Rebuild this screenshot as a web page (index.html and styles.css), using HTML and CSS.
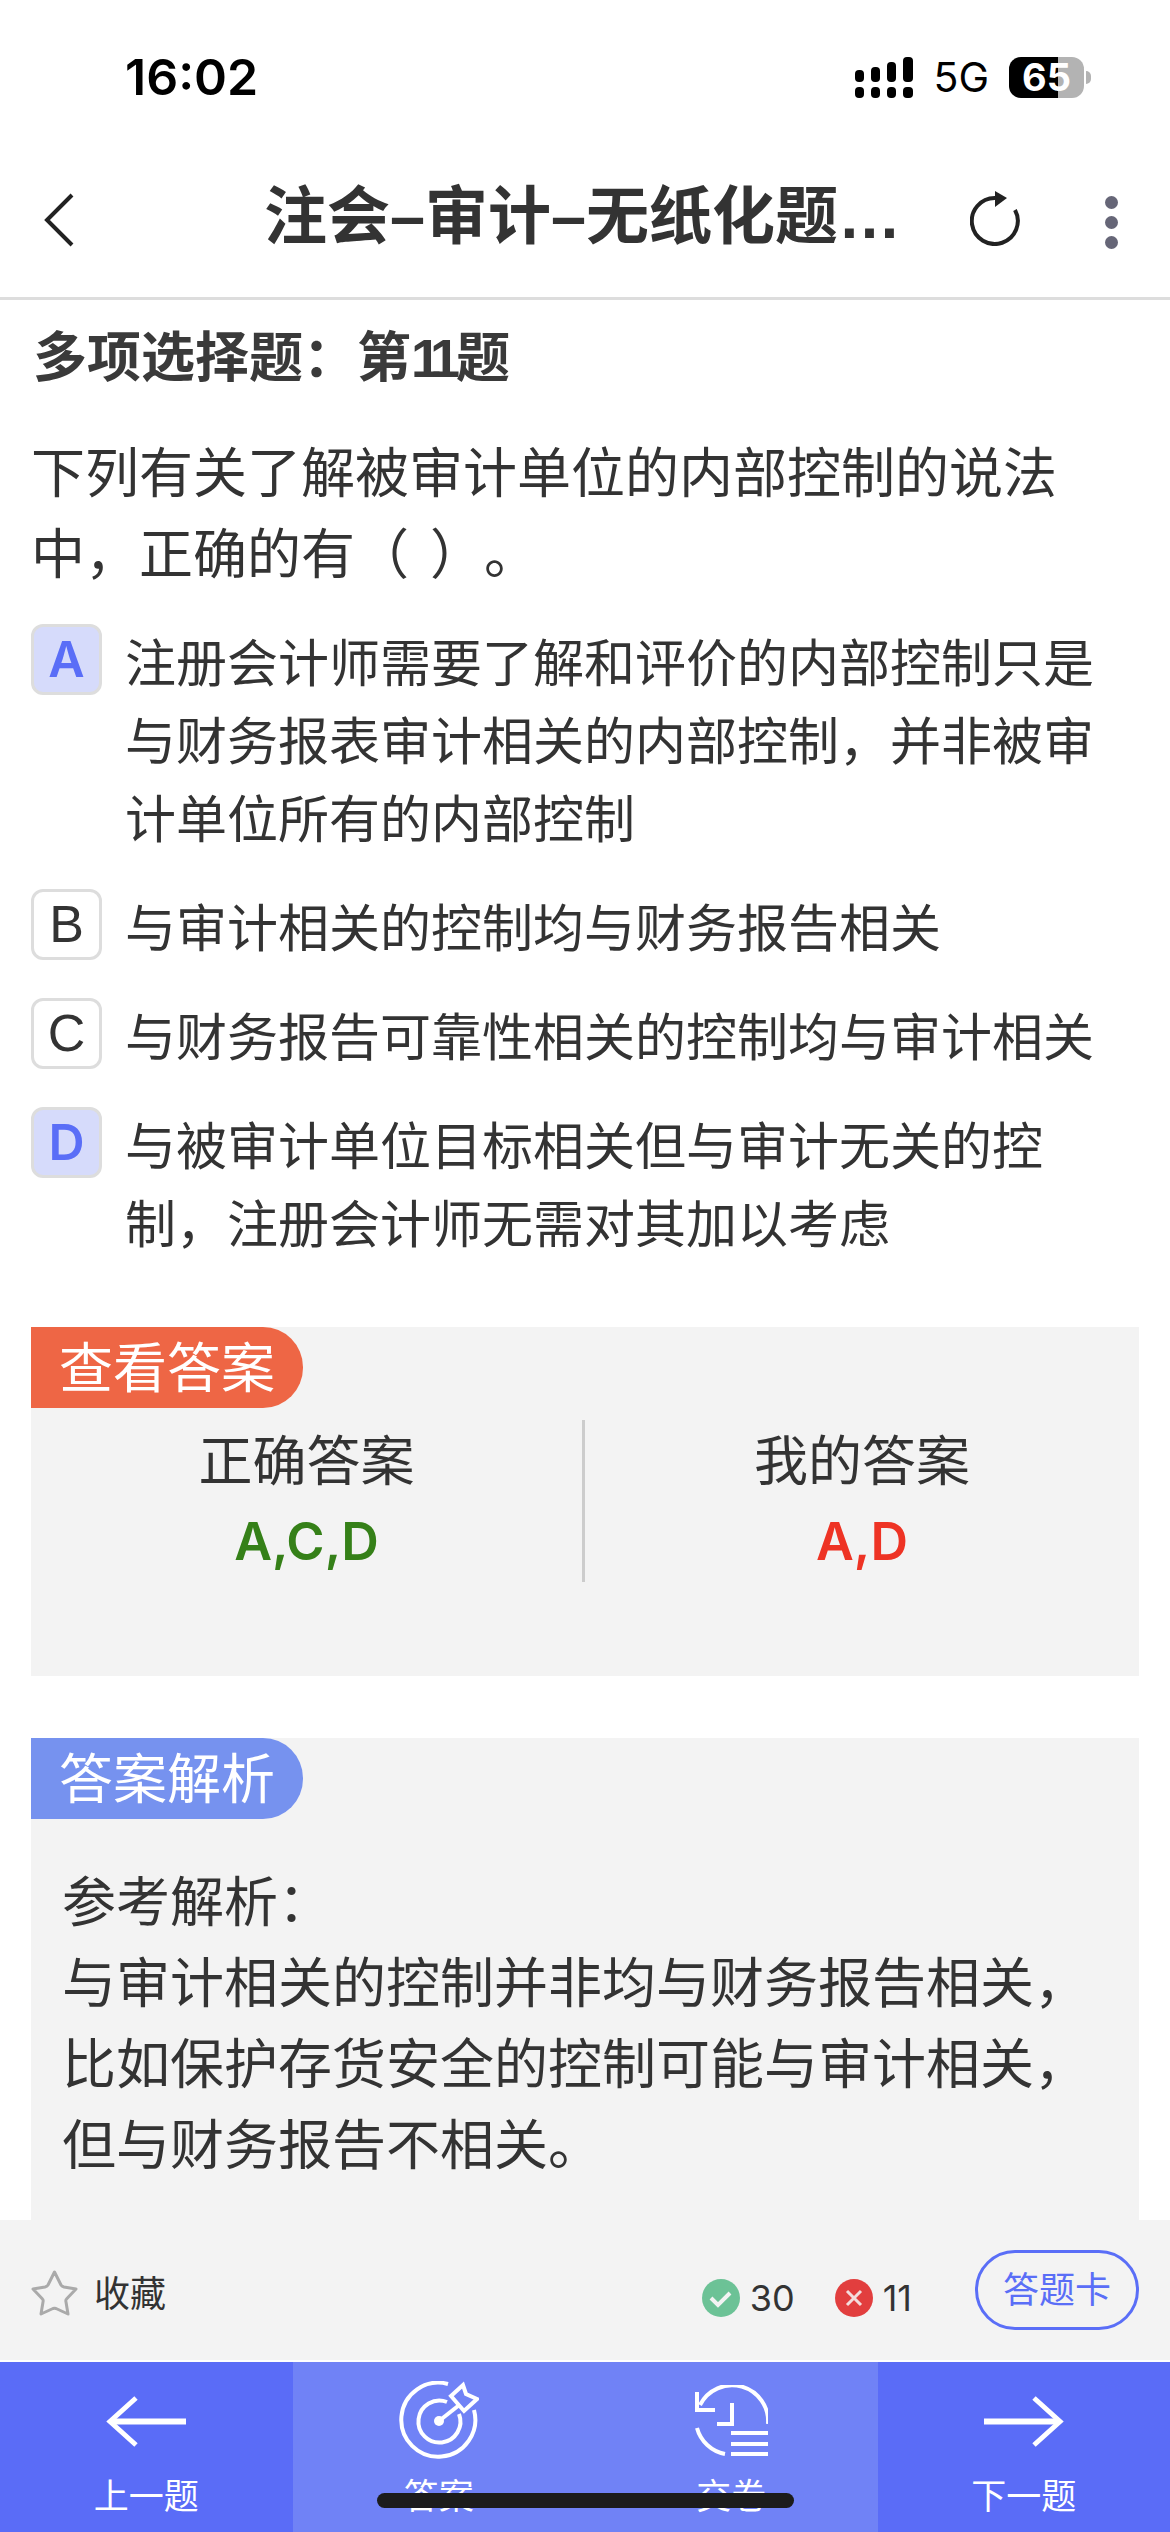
FILE: index.html
```html
<!DOCTYPE html>
<html lang="zh-CN">
<head>
<meta charset="utf-8">
<title>注会-审计-无纸化题库</title>
<link rel="stylesheet" href="styles.css">
</head>
<body>
<div class="app">
  <div class="status">
    <span class="time">16:02</span>
    <div class="status-right">
      <svg class="signal" viewBox="0 0 58 41" width="58" height="41" fill="#000">
        <rect x="0" y="13" width="9" height="12" rx="4"/><rect x="0" y="30" width="9" height="11" rx="4"/>
        <rect x="16" y="10" width="9" height="15" rx="4"/><rect x="16" y="30" width="9" height="11" rx="4"/>
        <rect x="32" y="5" width="9" height="20" rx="4"/><rect x="32" y="30" width="9" height="11" rx="4"/>
        <rect x="48" y="0" width="10" height="25" rx="4"/><rect x="48" y="30" width="10" height="11" rx="4"/>
      </svg>
      <span class="net">5G</span>
      <div class="battery">65</div>
    </div>
  </div>
  <header class="nav">
    <svg class="back" viewBox="0 0 30 54" width="30" height="54" fill="none" stroke="#222" stroke-width="4"><path d="M28 2 L3 27 L28 52"/></svg>
    <h1 class="title">注会–审计–无纸化题…</h1>
    <svg class="refresh" viewBox="0 0 50 56" width="50" height="56" fill="none" stroke="#222" stroke-width="4"><path d="M45 20 A23 23 0 1 1 25 8"/><path d="M25 1 L37 8 L25 17 Z" fill="#222" stroke="none"/></svg>
    <div class="dots"><i></i><i></i><i></i></div>
  </header>
  <main class="content">
    <h2 class="qtype">多项选择题：第<span class="qnum">11</span>题</h2>
    <p class="question">下列有关了解被审计单位的内部控制的说法中，正确的有（ ）。</p>
    <div class="option">
      <span class="badge picked">A</span>
      <p class="opt-text">注册会计师需要了解和评价的内部控制只是与财务报表审计相关的内部控制，并非被审计单位所有的内部控制</p>
    </div>
    <div class="option">
      <span class="badge">B</span>
      <p class="opt-text">与审计相关的控制均与财务报告相关</p>
    </div>
    <div class="option">
      <span class="badge">C</span>
      <p class="opt-text">与财务报告可靠性相关的控制均与审计相关</p>
    </div>
    <div class="option">
      <span class="badge picked">D</span>
      <p class="opt-text">与被审计单位目标相关但与审计无关的控制，注册会计师无需对其加以考虑</p>
    </div>
    <section class="card answer-card">
      <div class="tag tag-orange">查看答案</div>
      <div class="compare">
        <div class="col"><div>正确答案</div><div class="val ok">A,C,D</div></div>
        <div class="col"><div>我的答案</div><div class="val bad">A,D</div></div>
      </div>
    </section>
    <section class="card explain-card">
      <div class="tag tag-blue">答案解析</div>
      <p class="explain">参考解析：<br>与审计相关的控制并非均与财务报告相关，比如保护存货安全的控制可能与审计相关，但与财务报告不相关。</p>
    </section>
  </main>
  <div class="toolbar">
    <div class="fav">
      <svg viewBox="0 0 47 46" width="47" height="46" fill="none" stroke="#aaa" stroke-width="3" stroke-linejoin="round"><path d="M23.5 2 L30 15 Q31 16.500 33 17 L45 19 L35.500 29 Q34.500 30 35 32 L37 44 L25 38.500 Q23.500 38 22 38.500 L10 44 L12 32 Q12.500 30 11.500 29 L2 19 L14 17 Q16 16.500 17 15 Z"/></svg>
      <span class="fav-label">收藏</span>
    </div>
    <div class="stats">
      <svg viewBox="0 0 38 38" width="38" height="38"><circle cx="19" cy="19" r="19" fill="#6cc296"/><path d="M9 19 L16 26 L28 14" fill="none" stroke="#f3f3f3" stroke-width="4"/></svg>
      <span class="num num-ok">30</span>
      <svg viewBox="0 0 38 38" width="38" height="38"><circle cx="19" cy="19" r="19" fill="#e23e3e"/><path d="M12 12 L26 26 M26 12 L12 26" fill="none" stroke="#f3dcdc" stroke-width="3"/></svg>
      <span class="num">11</span>
    </div>
    <div class="card-btn">答题卡</div>
  </div>
  <nav class="tabs">
    <div class="tab">
      <div class="tab-icon"><svg viewBox="0 0 80 51" width="80" height="51" fill="none" stroke="#fff" stroke-width="6"><path d="M5 25.500 H80"/><path d="M30 2 L4 25.500 L30 49" stroke-width="5"/></svg></div>
      <span>上一题</span>
    </div>
    <div class="tab tab-light">
      <div class="tab-icon"><svg viewBox="0 0 80 80" width="80" height="80" fill="none" stroke="#fff" stroke-width="4"><path d="M49 3 A37 37 0 1 0 75 29"/><path d="M48 21 A21 21 0 1 0 60 33"/><path d="M40 40 L59 25"/><circle cx="40" cy="40" r="5" fill="#fff" stroke="none"/><path d="M52 15 L64 4 L67 13 L78 18 L65 30 Z"/></svg></div>
      <span>答案</span>
    </div>
    <div class="tab tab-light">
      <div class="tab-icon"><svg viewBox="0 0 73 72" width="73" height="72" fill="none" stroke="#fff" stroke-width="4"><path d="M73 39 A36 36 0 0 0 5 20"/><path d="M2 7 V25 H20"/><path d="M2 43 A36 36 0 0 0 30 69"/><path d="M37 18 V39 H22"/><path d="M36 48 H73 M36 59 H73 M36 69 H73"/></svg></div>
      <span>交卷</span>
    </div>
    <div class="tab">
      <div class="tab-icon"><svg viewBox="0 0 80 51" width="80" height="51" fill="none" stroke="#fff" stroke-width="6"><path d="M0 25.500 H75"/><path d="M50 2 L76 25.500 L50 49" stroke-width="5"/></svg></div>
      <span>下一题</span>
    </div>
  </nav>
  <div class="home"></div>
</div>
</body>
</html>
```
FILE: styles.css
```css
* { box-sizing: border-box; }
html, body { margin: 0; padding: 0; background: #fff; }
body { font-family: "Liberation Sans", "Noto Sans CJK SC", sans-serif; color: #333; }
p, h1, h2 { margin: 0; font-weight: normal; }

.app { position: relative; width: 1170px; height: 2532px; overflow: hidden; display: flex; flex-direction: column; }

.status { height: 110px; flex: none; display: flex; justify-content: space-between; align-items: flex-start; padding: 57px 86px 0 125px; }
.time { font-family: Inter, "Liberation Sans", sans-serif; font-size: 50px; font-weight: 600; line-height: 41px; color: #000; }
.status-right { display: flex; align-items: center; }
.net { font-family: Inter, "Liberation Sans", sans-serif; font-size: 41px; line-height: 41px; color: #000; margin: 0 20px; }
.battery { position: relative; width: 75px; height: 41px; border-radius: 12px; background: linear-gradient(to right, #000 65%, #b3b3b3 65%); color: #fff; font-family: Inter, "Liberation Sans", sans-serif; font-weight: 700; font-size: 38px; line-height: 41px; text-align: center; }
.battery::after { content: ""; position: absolute; left: 77px; top: 14px; width: 5px; height: 13px; border-radius: 0 6px 6px 0; background: #b3b3b3; }

.nav { height: 190px; flex: none; display: flex; align-items: flex-start; padding: 83px 52px 0 44px; border-bottom: 3px solid #ddd; }
.back { flex: none; }
.title { flex: none; margin: -7px 0 0 190px; font-size: 63px; font-weight: 700; line-height: 60px; white-space: nowrap; color: #333; width: 643px; }
.refresh { flex: none; margin-left: 63px; margin-top: -3px; }
.dots { display: flex; flex-direction: column; gap: 7px; margin-left: 85px; margin-top: 3px; }
.dots i { display: block; width: 13px; height: 13px; border-radius: 50%; background: #666677; }

.content { flex: 1; min-height: 0; overflow: hidden; padding: 18px 31px 0; }
.qtype { font-size: 54px; font-weight: 700; line-height: 80px; color: #3a3a3a; margin-left: 2px; }
.qnum { letter-spacing: -8px; margin-right: 4px; }
.question { font-size: 54px; line-height: 81px; margin-top: 36px; width: 1040px; margin-bottom: 28px; text-spacing-trim: space-all; word-spacing: 6px; }

.option { display: flex; gap: 23px; align-items: flex-start; margin-bottom: 29px; }
.badge { flex: none; width: 71px; height: 71px; border: 3px solid #ddd; border-radius: 12px; background: #fff; font-size: 52px; line-height: 65px; text-align: center; color: #333; }
.badge.picked { background: #d6dbfb; color: #5a6ef7; font-family: Inter, "Liberation Sans", sans-serif; font-weight: 600; font-size: 50px; }
.opt-text { width: 1013px; font-size: 51px; line-height: 78px; padding-top: 2px; }

.card { background: #f3f3f3; }
.answer-card { height: 349px; margin-top: 62px; }
.explain-card { margin-top: 62px; min-height: 700px; }
.tag { width: 272px; height: 81px; border-radius: 0 40px 40px 0; padding: 2px 0 0 28px; font-size: 54px; line-height: 81px; color: #fff; }
.tag-orange { background: #ee6645; }
.tag-blue { background: #7692ef; }

.compare { display: grid; grid-template-columns: 1fr 1fr; margin-top: 12px; }
.col { height: 162px; text-align: center; font-size: 54px; line-height: 81px; padding-top: 2px; }
.col:first-child { border-right: 3px solid #ccc; }
.val { font-family: Inter, "Liberation Sans", sans-serif; font-weight: 600; font-size: 52px; letter-spacing: 0; margin-top: -2px; }
.ok { color: #358018; }
.bad { color: #ee3324; }

.explain { font-size: 54px; line-height: 81px; padding: 44px 32px 0 31px; }

.toolbar { height: 142px; flex: none; background: #f3f3f3; border-bottom: 2px solid #fff; display: flex; align-items: flex-start; padding: 30px 31px 0; }
.fav { display: flex; align-items: center; gap: 16px; margin-top: 17px; font-size: 36px; line-height: 46px; }
.fav-label { padding-top: 5px; }
.stats { display: flex; align-items: center; margin-left: auto; margin-top: 29px; }
.num { font-family: Inter, "Liberation Sans", sans-serif; font-size: 36px; line-height: 38px; color: #333; margin-left: 10px; }
.num-ok { margin-right: 40px; }
.card-btn { width: 164px; height: 80px; margin-left: 63px; border: 3px solid #5a6ef7; border-radius: 40px; font-size: 36px; line-height: 76px; text-align: center; color: #5a6ef7; }

.tabs { height: 170px; flex: none; display: grid; grid-template-columns: repeat(4, 1fr); background: #5a6cf7; }
.tab { padding-top: 9px; display: flex; flex-direction: column; align-items: center; color: #fff; font-size: 35px; line-height: 52px; }
.tab-light { background: #7082f6; }
.tab-icon { height: 100px; display: flex; align-items: center; justify-content: center; }
.tab-icon svg { display: block; }

.home { position: absolute; left: 377px; top: 2493px; width: 417px; height: 15px; border-radius: 8px; background: #1c1c1c; }
```
